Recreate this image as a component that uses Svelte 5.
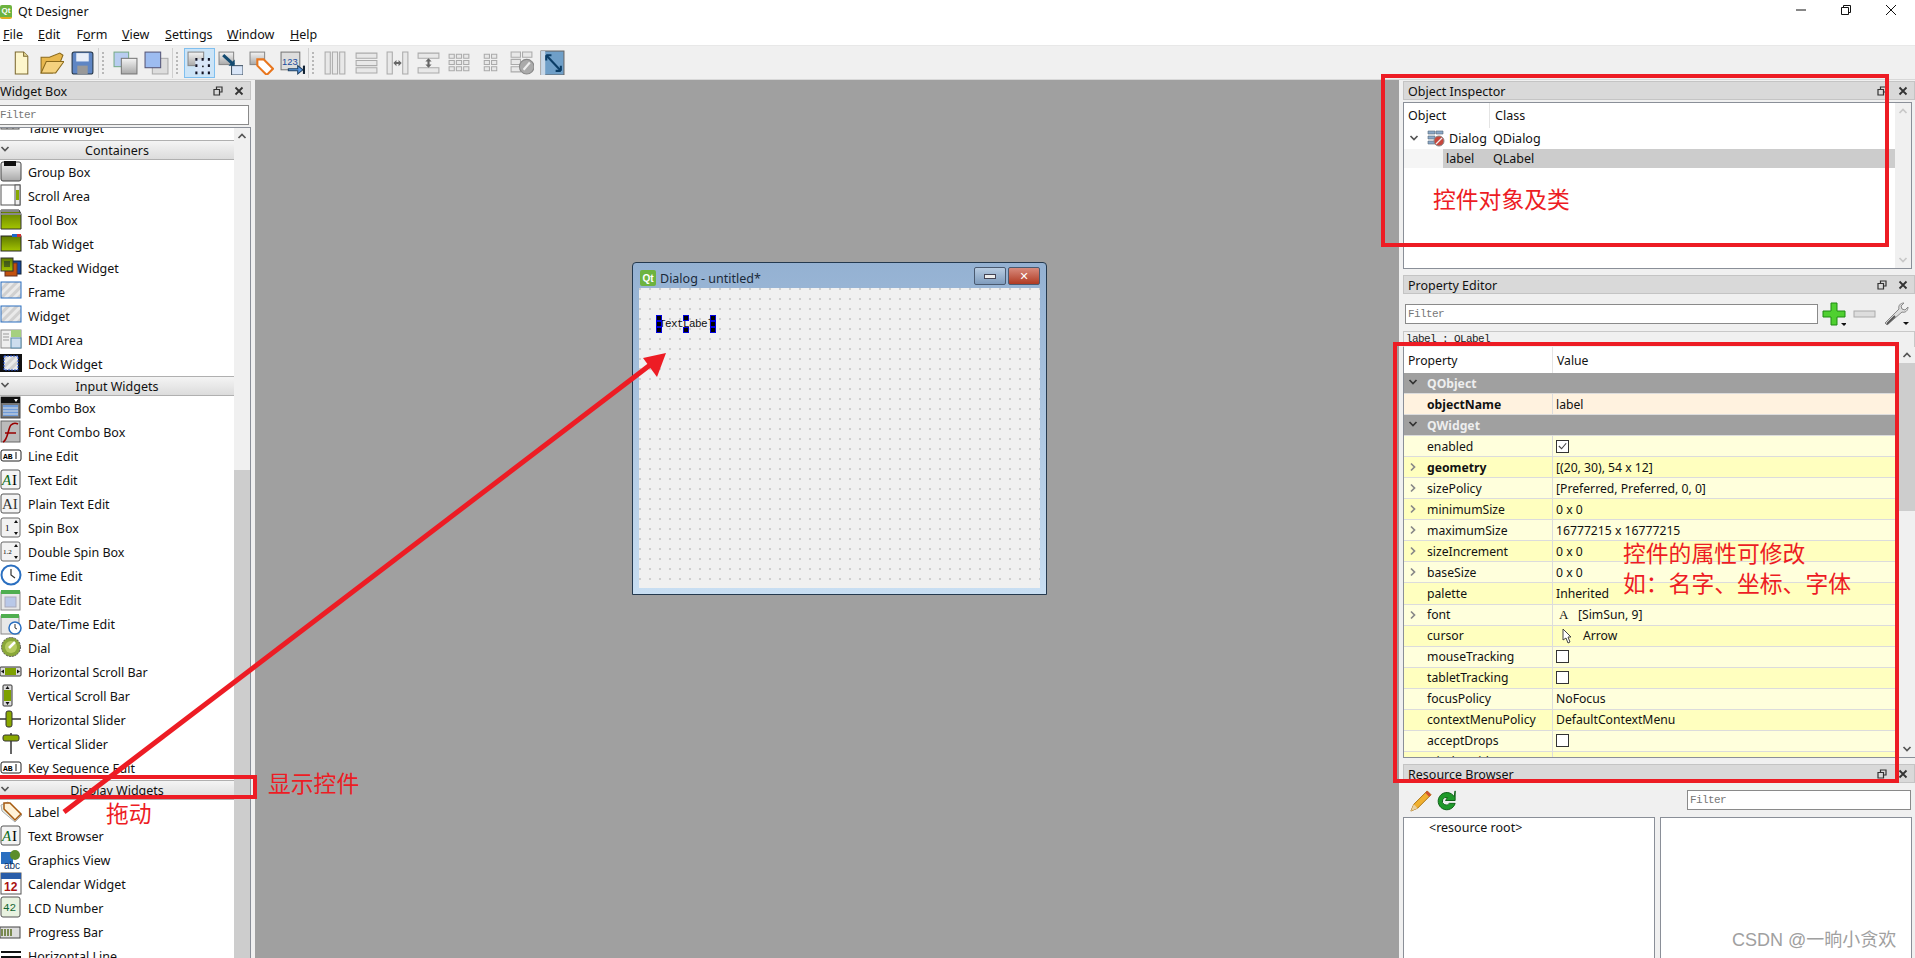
<script>
	const icons = {
		group: '<rect x="1" y="2" width="20" height="19" rx="2" fill="url(#gray)" stroke="#444"/><rect x="4" y="1" width="12" height="5" fill="#111"/>',
		scroll: '<rect x="1" y="1" width="19" height="20" fill="#fff" stroke="#555"/><rect x="15" y="1" width="5" height="20" fill="#eee" stroke="#555"/><rect x="16" y="6" width="3" height="10" fill="#8a0"/>',
		toolbox: '<path d="M1 2h18l2 4v15H1z" fill="url(#grn)" stroke="#333"/><path d="M1 3h18M1 6h20" stroke="#888" stroke-width="2"/>',
		tab: '<rect x="1" y="4" width="20" height="15" fill="url(#grn)" stroke="#222"/><rect x="12" y="2" width="5" height="3" fill="#1c68c8"/><rect x="17" y="2" width="4" height="3" fill="#c33"/>',
		stacked: '<rect x="8" y="5" width="13" height="13" fill="#1549a8" stroke="#123"/><rect x="5" y="7" width="12" height="13" fill="#c2510f" stroke="#632"/><rect x="1" y="2" width="12" height="13" fill="url(#grn)" stroke="#333"/><path d="M4 6h6M4 8h6M4 10h6" stroke="#123"/>',
		frame: '<rect x="1" y="2" width="20" height="16" fill="url(#hatch)" stroke="#2a6fc0"/>',
		mdi: '<rect x="1" y="2" width="20" height="18" fill="#eee" stroke="#888"/><rect x="11" y="2" width="10" height="7" fill="#a5d080"/><rect x="11" y="10" width="10" height="10" fill="#cde" stroke="#58a"/><path d="M3 6h6M3 9h6M3 12h6" stroke="#999"/>',
		dock: '<rect x="0" y="2" width="22" height="18" fill="#111"/><rect x="4" y="4" width="14" height="14" fill="url(#hatch)" stroke="#25d" stroke-dasharray="2 1"/>',
		combo: '<rect x="1" y="1" width="19" height="21" fill="#777" stroke="#444"/><rect x="1" y="1" width="19" height="6" fill="#111"/><path d="M14 3h4l-2 3z" fill="#fff"/><rect x="3" y="9" width="15" height="11" fill="#6f9bd8"/><path d="M3 12h15M3 15h15M3 18h15" stroke="#ddd"/>',
		fontcombo: '<rect x="1" y="1" width="19" height="21" fill="#bbb" stroke="#666"/><path d="M3 22C8 20 8 8 11 5c2-2 5-2 7-1M5 13h11" fill="none" stroke="#900" stroke-width="1.6"/>',
		line: '<rect x="1" y="6" width="20" height="11" rx="2" fill="#fff" stroke="#222"/><text x="3" y="15" font-size="8" font-weight="700" font-family="Liberation Mono">AB</text><path d="M16 8v7" stroke="#111"/>',
		text: '<rect x="1" y="2" width="19" height="19" rx="2" fill="#f4f4f4" stroke="#555"/><text x="2" y="17" font-size="15" fill="#0a6b1a" font-family="Liberation Serif" font-style="italic">A</text><text x="12" y="17" font-size="15" font-family="Liberation Serif">I</text>',
		plain: '<rect x="1" y="2" width="19" height="19" rx="2" fill="#f4f4f4" stroke="#555"/><text x="2" y="17" font-size="15" fill="#333" font-family="Liberation Serif">AI</text>',
		spin: '<rect x="1" y="2" width="19" height="19" rx="2" fill="#f2f2f2" stroke="#666"/><text x="5" y="15" font-size="9" font-family="Liberation Serif">1</text><path d="M14 7l2-3 2 3zM14 16l2 3 2-3z" fill="#111"/>',
		dspin: '<rect x="1" y="2" width="19" height="19" rx="2" fill="#f2f2f2" stroke="#666"/><text x="3" y="14" font-size="7" font-family="Liberation Serif">1.2</text><path d="M14 7l2-3 2 3zM14 16l2 3 2-3z" fill="#111"/>',
		time: '<circle cx="11" cy="11" r="9.5" fill="#fff" stroke="#2a6fc0" stroke-width="2"/><path d="M11 5v6l4 3" fill="none" stroke="#333" stroke-width="1.2"/>',
		date: '<rect x="1" y="4" width="19" height="18" fill="#e8e8e8" stroke="#888"/><rect x="1" y="2" width="19" height="4" fill="#4fae4f"/><rect x="5" y="9" width="11" height="10" fill="#b9c8e8" stroke="#aab"/>',
		datetime: '<rect x="1" y="4" width="18" height="18" fill="#e8e8e8" stroke="#888"/><rect x="1" y="2" width="18" height="4" fill="#4fae4f"/><circle cx="15" cy="16" r="6" fill="#fff" stroke="#2a6fc0" stroke-width="1.5"/><path d="M15 12v4l2 1" fill="none" stroke="#333"/>',
		dial: '<circle cx="11" cy="11" r="9.5" fill="#8aa838" stroke="#555" stroke-dasharray="2 1"/><circle cx="11" cy="11" r="6" fill="#b7cc60"/><path d="M9 12l6-6" stroke="#fff" stroke-width="2.5"/>',
		hscroll: '<rect x="0" y="7" width="21" height="9" rx="1" fill="#ddd" stroke="#333"/><rect x="5" y="8" width="11" height="7" fill="#7da000"/><path d="M1 11.5l3-2v4zM20 11.5l-3-2v4z" fill="#111"/>',
		vscroll: '<rect x="3" y="1" width="9" height="21" rx="1" fill="#ddd" stroke="#333"/><rect x="4" y="6" width="7" height="11" fill="#7da000"/><path d="M7.5 2l2 3h-4zM7.5 21l2-3h-4z" fill="#111"/>',
		hslider: '<path d="M0 11h21" stroke="#333" stroke-width="1.5"/><rect x="6" y="3" width="6" height="16" rx="2" fill="#8aa800" stroke="#333"/>',
		vslider: '<path d="M11 1v21" stroke="#333" stroke-width="1.5"/><rect x="3" y="3" width="16" height="6" rx="2" fill="#8aa800" stroke="#333"/>',
		label: '<path d="M1 5l7-3 14 13-7 7L2 11z" fill="#e8f0e8" stroke="#aaa"/><path d="M4 3h6l11 11-6 6L4 9z" fill="#fff2d8" stroke="#a65a10" stroke-width="1.5"/>',
		graphics: '<rect x="1" y="4" width="12" height="12" fill="#2a6fc0"/><circle cx="15" cy="7" r="5" fill="#5b8e2a"/><text x="4" y="21" font-size="10" fill="#136" font-family="Liberation Sans">abc</text>',
		calendar: '<rect x="1" y="1" width="20" height="21" fill="#fff" stroke="#555"/><rect x="1" y="1" width="20" height="6" fill="#2a5da8"/><text x="4" y="19" font-size="12" font-weight="700" fill="#a11" font-family="Liberation Sans">12</text>',
		lcd: '<rect x="1" y="1" width="19" height="20" rx="2" fill="#e8f2e0" stroke="#555"/><text x="3" y="15" font-size="11" fill="#163" font-family="Liberation Mono">42</text>',
		progress: '<rect x="0" y="7" width="20" height="11" fill="#ddd" stroke="#444"/><path d="M2 9v7M5 9v7M8 9v7M11 9v7" stroke="#7a8a50" stroke-width="2"/>',
		hline: '<path d="M1 8h20M1 13h20M1 18h20" stroke="#111" stroke-width="2"/>',
		table: '<rect x="1" y="1" width="18" height="12" fill="#ddd" stroke="#555"/><path d="M7 1v12M13 1v12M1 7h18" stroke="#555"/>',
		newdoc: '<path d="M7 2h8l4 4v17H7z" fill="#fdf6cc" stroke="#7d6a30"/><path d="M15 2v4h4" fill="#e8dd99" stroke="#7d6a30"/>',
		open: '<path d="M2 22V7h8l10-4 3 2-4 10-6 7z" fill="#e8b84e" stroke="#8a6a1c"/><path d="M2 22l5-11h17l-8 11z" fill="#f5d27e" stroke="#8a6a1c"/>',
		save: '<rect x="2" y="2" width="20" height="21" rx="2" fill="#5f86c4" stroke="#234"/><rect x="6" y="3" width="12" height="8" fill="#e8eef8"/><rect x="7" y="15" width="10" height="8" fill="#999"/>',
		widgets1: '<rect x="1" y="2" width="14" height="14" fill="#b8cdf0" stroke="#7a8"/><rect x="8" y="8" width="15" height="15" fill="url(#gray)" stroke="#777"/>',
		widgets2: '<rect x="8" y="8" width="15" height="15" fill="#ddd" stroke="#aaa"/><rect x="1" y="2" width="15" height="15" fill="#9dbcf0" stroke="#557"/>',
		edit: '<rect x="1" y="2" width="15" height="13" fill="url(#gray)" stroke="#888"/><rect x="8" y="9" width="14" height="13" fill="#d9e6f8"/><path d="M8 9h2M20 9h2M8 22h2M20 22h2M14 9h2M14 22h2M8 15h2M20 15h2" stroke="#112" stroke-width="2.5"/><rect x="14.5" y="15" width="1.5" height="1.5" fill="#111"/>',
		signals: '<rect x="1" y="2" width="14" height="12" fill="url(#gray)" stroke="#888"/><rect x="13" y="15" width="11" height="9" fill="#d9e6f8" stroke="#456"/><path d="M5 5l10 9" stroke="#124a70" stroke-width="3"/><path d="M10 15h6v-6z" fill="#124a70"/>',
		buddy: '<rect x="1" y="2" width="14" height="12" fill="url(#gray)" stroke="#888"/><path d="M8 9h6l9 9-6 6-9-9z" fill="#fff" stroke="#e8761e" stroke-width="2"/>',
		tab123: '<rect x="1" y="2" width="18" height="17" fill="#ddd" stroke="#777"/><text x="2" y="14" font-size="9" fill="#1b4b9b" font-family="Liberation Sans">123</text><path d="M8 18h9v-3l5 4-5 4v-3H8z" fill="#5a97e0" stroke="#246"/><path d="M23 15v8" stroke="#123" stroke-width="2"/>',
		lh: '<path d="M2 2h5v21H2zM9 2h5v21H9zM16 2h5v21h-5z" fill="#e8e8e8" stroke="#aaa"/>',
		lv: '<path d="M2 3h20v5H2zM2 10h20v5H2zM2 17h20v5H2z" fill="#e8e8e8" stroke="#aaa"/>',
		splith: '<path d="M2 2h5v21H2zM17 2h5v21h-5z" fill="#e8e8e8" stroke="#aaa"/><path d="M8 12.5l3-3v2h2v-2l3 3-3 3v-2h-2v2z" fill="#666"/>',
		splitv: '<path d="M2 3h20v5H2zM2 17h20v5H2z" fill="#e8e8e8" stroke="#aaa"/><path d="M12 8l3 3h-2v3h2l-3 3-3-3h2v-3H9z" fill="#666"/>',
		grid: '<path d="M2 4h5v4H2zM9 4h5v4H9zM16 4h5v4h-5zM2 10h5v4H2zM9 10h5v4H9zM16 10h5v4h-5zM2 16h5v4H2zM9 16h5v4H9zM16 16h5v4h-5z" fill="#e8e8e8" stroke="#aaa"/>',
		formgrid: '<path d="M6 4h5v4H6zM13 4h5v4h-5zM6 10h5v4H6zM13 10h5v4h-5zM6 16h5v4H6zM13 16h5v4h-5z" fill="#e8e8e8" stroke="#aaa"/>',
		breakl: '<path d="M2 2h9v5H2zM13 2h9v5h-9zM2 9h9v5H2zM2 16h9v5H2z" fill="#e8e8e8" stroke="#aaa"/><circle cx="17" cy="16" r="7" fill="#aaa" stroke="#888"/><path d="M20 12l-6 7" stroke="#eee" stroke-width="2"/>',
		adjust: '<rect x="1" y="1" width="22" height="23" fill="#6f9fc8" stroke="#666"/><rect x="1" y="1" width="4" height="23" fill="#c8d8e8"/><path d="M6 5l14 15" stroke="#0b3d66" stroke-width="2"/><path d="M6 5h5M6 5v5M20 20h-5M20 20v-5" stroke="#0b3d66" stroke-width="2"/>'
	};

	const sections = [
		{ title: 'Containers', items: [['Group Box', 'group'], ['Scroll Area', 'scroll'], ['Tool Box', 'toolbox'], ['Tab Widget', 'tab'], ['Stacked Widget', 'stacked'], ['Frame', 'frame'], ['Widget', 'frame'], ['MDI Area', 'mdi'], ['Dock Widget', 'dock']] },
		{ title: 'Input Widgets', items: [['Combo Box', 'combo'], ['Font Combo Box', 'fontcombo'], ['Line Edit', 'line'], ['Text Edit', 'text'], ['Plain Text Edit', 'plain'], ['Spin Box', 'spin'], ['Double Spin Box', 'dspin'], ['Time Edit', 'time'], ['Date Edit', 'date'], ['Date/Time Edit', 'datetime'], ['Dial', 'dial'], ['Horizontal Scroll Bar', 'hscroll'], ['Vertical Scroll Bar', 'vscroll'], ['Horizontal Slider', 'hslider'], ['Vertical Slider', 'vslider'], ['Key Sequence Edit', 'line']] },
		{ title: 'Display Widgets', items: [['Label', 'label'], ['Text Browser', 'text'], ['Graphics View', 'graphics'], ['Calendar Widget', 'calendar'], ['LCD Number', 'lcd'], ['Progress Bar', 'progress'], ['Horizontal Line', 'hline']] }
	];

	const toolbar = [
		['newdoc', 'open', 'save'],
		['widgets1', 'widgets2'],
		['edit', 'signals', 'buddy', 'tab123'],
		['lh', 'lv', 'splith', 'splitv', 'grid', 'formgrid', 'breakl', 'adjust']
	];

	const menus = [['F', 'ile'], ['E', 'dit'], ['F', 'o', 'rm'], ['V', 'iew'], ['S', 'ettings'], ['W', 'indow'], ['H', 'elp']];

	const props = [
		{ name: 'QObject', group: true },
		{ name: 'objectName', value: 'label', bold: true, tone: 'peach' },
		{ name: 'QWidget', group: true },
		{ name: 'enabled', check: true, checked: true, tone: 'light' },
		{ name: 'geometry', value: '[(20, 30), 54 x 12]', bold: true, more: true, tone: 'dark' },
		{ name: 'sizePolicy', value: '[Preferred, Preferred, 0, 0]', more: true, tone: 'light' },
		{ name: 'minimumSize', value: '0 x 0', more: true, tone: 'dark' },
		{ name: 'maximumSize', value: '16777215 x 16777215', more: true, tone: 'light' },
		{ name: 'sizeIncrement', value: '0 x 0', more: true, tone: 'dark' },
		{ name: 'baseSize', value: '0 x 0', more: true, tone: 'light' },
		{ name: 'palette', value: 'Inherited', tone: 'dark' },
		{ name: 'font', value: '[SimSun, 9]', more: true, glyph: 'font', tone: 'light' },
		{ name: 'cursor', value: 'Arrow', glyph: 'cursor', tone: 'dark' },
		{ name: 'mouseTracking', check: true, tone: 'light' },
		{ name: 'tabletTracking', check: true, tone: 'dark' },
		{ name: 'focusPolicy', value: 'NoFocus', tone: 'light' },
		{ name: 'contextMenuPolicy', value: 'DefaultContextMenu', tone: 'dark' },
		{ name: 'acceptDrops', check: true, tone: 'light' },
		{ name: 'windowTitle', value: '', tone: 'dark' }
	];
</script>

{#snippet icon(name, size = 24)}
	<svg class="ico" viewBox="0 0 24 24" width={size} height={size}>{@html icons[name]}</svg>
{/snippet}

{#snippet chevron(cls)}
	<svg class="chev {cls}" viewBox="0 0 10 10" width="10" height="10"><path d="M1.5 3l3.5 3.5L8.5 3" fill="none" stroke="currentColor" stroke-width="1.7" /></svg>
{/snippet}

{#snippet dockbtns()}
	<span class="dockbtns">
		<svg viewBox="0 0 10 10" width="10" height="10"><path d="M3.5 3.5V1h5.5v5H6.5M1 3.5h5.5v5.5H1z" fill="none" stroke="#333" stroke-width="1.2" /></svg>
		<svg viewBox="0 0 10 10" width="10" height="10"><path d="M1.5 1.5l7 7M8.5 1.5l-7 7" stroke="#333" stroke-width="1.8" /></svg>
	</span>
{/snippet}

{#snippet sbar(gap, thumb, disabled = false, endArrow = true)}
	<div class="sbar" class:off={disabled}>
		<svg class="arrow" viewBox="0 0 10 10" width="10" height="10"><path d="M1.5 7l3.5-3.5L8.5 7" fill="none" stroke="currentColor" stroke-width="1.7" /></svg>
		<div class="track">
			<div style="height: {gap}px"></div>
			{#if thumb}<div class="thumb" style="height: {thumb}px"></div>{/if}
		</div>
		{#if endArrow}
			<svg class="arrow" viewBox="0 0 10 10" width="10" height="10"><path d="M1.5 3l3.5 3.5L8.5 3" fill="none" stroke="currentColor" stroke-width="1.7" /></svg>
		{/if}
	</div>
{/snippet}

<svg class="defs" width="0" height="0">
	<defs>
		<linearGradient id="gray" x1="0" y1="0" x2="0" y2="1"><stop offset="0" stop-color="#f4f4f4" /><stop offset="1" stop-color="#a8a8a8" /></linearGradient>
		<linearGradient id="grn" x1="0" y1="0" x2="0" y2="1"><stop offset="0" stop-color="#5f7a00" /><stop offset="1" stop-color="#a4c400" /></linearGradient>
		<pattern id="hatch" width="6" height="6" patternUnits="userSpaceOnUse" patternTransform="rotate(45)"><rect width="6" height="6" fill="#eaeaea" /><rect width="3" height="6" fill="#d0d0d0" /></pattern>
	</defs>
</svg>

<div class="app">
	<header class="titlebar">
		<span class="qt small">Qt</span>
		<span class="apptitle">Qt Designer</span>
		<div class="winbtns">
			<svg viewBox="0 0 12 12" width="12" height="12"><path d="M1 6h10" stroke="#111" /></svg>
			<svg viewBox="0 0 12 12" width="12" height="12"><path d="M1.5 3.5h7v7h-7zM3.5 3.5v-2h7v7h-2" fill="none" stroke="#111" /></svg>
			<svg viewBox="0 0 12 12" width="12" height="12"><path d="M1 1l10 10M11 1L1 11" stroke="#111" /></svg>
		</div>
	</header>

	<nav class="menubar">
		{#each menus as m}
			{#if m.length === 3}
				<span>{m[0]}<u>{m[1]}</u>{m[2]}</span>
			{:else}
				<span><u>{m[0]}</u>{m[1]}</span>
			{/if}
		{/each}
	</nav>

	<div class="toolbar">
		{#each toolbar as group, g}
			{#if g > 0}<span class="sep"></span>{/if}
			{#each group as name}
				<span class="tool" class:active={name === 'edit'}>{@render icon(name, 25)}</span>
			{/each}
		{/each}
	</div>

	<main class="body">
		<aside class="left">
			<div class="docktitle"><span class="dt">Widget Box</span>{@render dockbtns()}</div>
			<div class="filter boxfilter">Filter</div>
			<div class="boxlist">
				<div class="boxrows">
					<div class="boxscroll">
						<div class="wrow">{@render icon('table', 24)}<span>Table Widget</span></div>
						{#each sections as s}
							<div class="cat">{@render chevron('catchev')}{s.title}</div>
							{#each s.items as [label, ic]}
								<div class="wrow">{@render icon(ic, 24)}<span>{label}</span></div>
							{/each}
						{/each}
					</div>
				</div>
				{@render sbar(326, 600, false, false)}
			</div>
		</aside>

		<section class="canvas">
			<div class="dialog">
				<div class="dlgtitle">
					<span class="qt">Qt</span>
					<span class="dlgname">Dialog - untitled*</span>
					<span class="dlgmin"><i></i></span>
					<span class="dlgclose">✕</span>
				</div>
				<div class="form">
					<div class="textlabel">
						<span class="tl">TextLabel</span>
						{#each ['a', 'b', 'c', 'd', 'e', 'f', 'g', 'h'] as h}
							<i class="handle {h}"></i>
						{/each}
					</div>
				</div>
			</div>
		</section>

		<aside class="right">
			<div class="docktitle"><span class="dt">Object Inspector</span>{@render dockbtns()}</div>
			<div class="inspector">
				<div class="treewrap">
					<div class="thead">
						<span class="tobj">Object</span><span>Class</span>
					</div>
					<div class="treerow">
						{@render chevron('treechev')}
						<svg class="dlgico" viewBox="0 0 18 18" width="18" height="18">
							<path d="M1 2h7v3H1zM9 2h7v3H9zM1 7h7v3H1zM1 12h7v3H1z" fill="#8aa8c8" stroke="#567" stroke-width=".6" />
							<circle cx="12" cy="12" r="5" fill="#c8463c" stroke="#888" />
							<path d="M9 15l6-6" stroke="#eee" stroke-width="1.3" />
						</svg>
						<span class="tname">Dialog</span><span>QDialog</span>
					</div>
					<div class="treerow sel">
						<span class="treeindent"></span>
						<span class="tlabel">label</span><span>QLabel</span>
					</div>
				</div>
				{@render sbar(0, 0, true)}
			</div>

			<div class="docktitle second"><span class="dt">Property Editor</span>{@render dockbtns()}</div>
			<div class="propbar">
				<div class="filter propfilter">Filter</div>
				<svg viewBox="0 0 24 24" width="24" height="24"><path d="M9 1h6v8h8v6h-8v8H9v-8H1V9h8z" fill="#4fd030" stroke="#1e8a12" /><path d="M19 21h6l-3 3z" fill="#111" /></svg>
				<svg class="minus" viewBox="0 0 24 24" width="24" height="24"><rect x="1" y="9" width="21" height="6" fill="#ddd" stroke="#aaa" /></svg>
				<svg viewBox="0 0 26 26" width="26" height="26"><path d="M4 24l-2-2L16 8c-1-3 1-6 5-6l-3 3 1 3 3 1 3-3c0 4-3 6-6 5z" fill="#ddd" stroke="#888" /><path d="M4 23l8-8" stroke="#555" stroke-width="2" /><path d="M20 21h6l-3 3z" fill="#111" /></svg>
			</div>
			<div class="classname"><span>label : QLabel</span></div>
			<div class="props">
				<div class="ptable">
					<div class="phead"><span class="pn">Property</span><span class="pv">Value</span></div>
					{#each props as p}
						{#if p.group}
							<div class="prow group">{@render chevron('groupchev')}<span class="pgroup">{p.name}</span></div>
						{:else}
							<div class="prow {p.tone}">
								<span class="pname" class:bold={p.bold}>
									{#if p.more}
										<svg class="more" viewBox="0 0 10 10" width="10" height="10"><path d="M3 1.5L6.5 5 3 8.5" fill="none" stroke="#888" stroke-width="1.7" /></svg>
									{/if}
									{p.name}
								</span>
								<span class="pvalue">
									{#if p.check}
										<span class="cb">
											{#if p.checked}
												<svg viewBox="0 0 12 12" width="12" height="12"><path d="M2 6l3 3 5-6" fill="none" stroke="#444" stroke-width="1.2" /></svg>
											{/if}
										</span>
									{:else if p.glyph === 'font'}
										<span class="gl">A</span><span>{p.value}</span>
									{:else if p.glyph === 'cursor'}
										<svg class="cur" viewBox="0 0 12 16" width="12" height="16"><path d="M2 1v11l3-2 2 5 2-1-2-5h3z" fill="#fff" stroke="#444" /></svg><span>{p.value}</span>
									{:else}
										{p.value}
									{/if}
								</span>
							</div>
						{/if}
					{/each}
				</div>
				{@render sbar(0, 148)}
			</div>

			<div class="docktitle third"><span class="dt">Resource Browser</span>{@render dockbtns()}</div>
			<div class="resbar">
				<svg viewBox="0 0 24 24" width="23" height="23"><path d="M2 23l3-7L19 2l4 4L9 20z" fill="#f0b030" stroke="#a87010" /><path d="M2 23l3-7 4 4z" fill="#e8d0a0" /><path d="M19 2l4 4-2 2-4-4z" fill="#d05030" /></svg>
				<svg viewBox="0 0 24 24" width="23" height="23"><path d="M20 8a9 9 0 1 0 1 7h-6a4 4 0 1 1-2-6l-2 3h10V2z" fill="#1f9a2a" stroke="#0c5d14" /></svg>
				<div class="filter resfilter">Filter</div>
			</div>
			<div class="respanes">
				<div class="respane first"><span>&lt;resource root&gt;</span></div>
				<div class="respane"></div>
			</div>
		</aside>
	</main>

	<div class="redbox rb1"></div>
	<div class="redbox rb2"></div>
	<div class="redbox rb3"></div>
	<svg class="arrowlay" viewBox="0 0 1915 958" width="1915" height="958">
		<path d="M64 812L654 362" stroke="#ed1c24" stroke-width="5" />
		<path d="M666 353L643 358L657 377z" fill="#ed1c24" />
	</svg>
	<span class="note n1">显示控件</span>
	<span class="note n2">拖动</span>
	<span class="note n3">控件对象及类</span>
	<span class="note n4">控件的属性可修改</span>
	<span class="note n5">如：名字、坐标、字体</span>
	<span class="mark">CSDN @一晌小贪欢</span>
</div>

<style>
	:global(body) {
		margin: 0;
		background: #f0f0f0;
	}

	.defs {
		position: absolute;
	}

	.app {
		position: relative;
		width: 1915px;
		height: 958px;
		overflow: hidden;
		display: flex;
		flex-direction: column;
		font-family: 'Noto Sans', 'Noto Sans CJK SC', sans-serif;
		font-size: 12px;
		color: #111;
		background: #f0f0f0;
	}

	.ico {
		flex: none;
		display: block;
	}

	.qt {
		display: inline-flex;
		align-items: center;
		justify-content: center;
		width: 16px;
		height: 16px;
		background: #6db33f;
		border-radius: 2px;
		color: #fff;
		font: 700 10px 'Liberation Sans', sans-serif;
	}

	.qt.small {
		width: 12px;
		height: 14px;
		font-size: 8px;
		border-bottom: 2px solid #e0b020;
		box-sizing: border-box;
	}

	.titlebar {
		height: 24px;
		flex: none;
		background: #fff;
		display: flex;
		align-items: center;
		gap: 6px;
		padding-bottom: 1px;
		box-sizing: border-box;
		font-size: 12.5px;
	}

	.winbtns {
		margin-left: auto;
		display: flex;
		gap: 33px;
		padding: 0 18px 3px 0;
	}

	.menubar {
		height: 22px;
		flex: none;
		background: #fff;
		display: grid;
		grid-template-columns: 35px 38.5px 45.5px 43px 62px 63px auto;
		align-items: center;
		padding-left: 3px;
		border-bottom: 1px solid #e8e8e8;
		box-sizing: border-box;
		font-size: 12.5px;
	}

	.toolbar {
		height: 34px;
		flex: none;
		display: flex;
		align-items: center;
		padding-left: 5px;
		border-bottom: 1px solid #d8d8d8;
		box-sizing: border-box;
	}

	.tool {
		width: 31px;
		height: 30px;
		display: flex;
		align-items: center;
		justify-content: center;
		box-sizing: border-box;
	}

	.tool.active {
		background: #cce4f7;
		border: 1px solid #7fbfef;
	}

	.sep {
		width: 12px;
		height: 30px;
		box-sizing: border-box;
		border-left: 1px solid #d0d0d0;
		margin-left: 0;
		position: relative;
	}

	.sep::after {
		content: '';
		position: absolute;
		left: 3px;
		top: 4px;
		bottom: 4px;
		border-left: 2px dotted #b8b8b8;
	}

	.body {
		flex: 1;
		display: flex;
		min-height: 0;
	}

	.left {
		width: 255px;
		flex: none;
		display: flex;
		flex-direction: column;
		padding-top: 1px;
		box-sizing: border-box;
	}

	.docktitle {
		height: 19px;
		flex: none;
		background: #d9d9d9;
		border: 1px solid #c4c4c4;
		box-sizing: border-box;
		display: flex;
		align-items: center;
		padding-left: 4px;
		font-size: 12.5px;
	}

	.dt {
		padding-top: 2px;
	}

	.left .docktitle {
		width: 251px;
		padding-left: 0;
		border-left: 0;
	}

	.dockbtns {
		margin-left: auto;
		display: flex;
		gap: 11px;
		padding-right: 6px;
	}

	.filter {
		box-sizing: border-box;
		background: #fff;
		border: 1px solid #8a8a8a;
		font-family: 'Liberation Mono', monospace;
		font-size: 11px;
		letter-spacing: -0.6px;
		color: #777;
		display: flex;
		align-items: center;
		padding-left: 2px;
	}

	.boxfilter {
		width: 249px;
		height: 20px;
		margin: 5px 0 2px;
		padding-left: 0;
		border-left: 0;
	}

	.boxlist {
		flex: 1;
		min-height: 0;
		width: 251px;
		display: flex;
		background: #fff;
		border: 1px solid #8a8f98;
		border-left: 0;
		border-bottom: 0;
		box-sizing: border-box;
	}

	.boxrows {
		flex: 1;
		overflow: hidden;
	}

	.boxscroll {
		margin-top: -12px;
	}

	.wrow {
		height: 24px;
		display: flex;
		align-items: center;
		gap: 4px;
		font-size: 12.5px;
	}

	.cat {
		height: 20px;
		box-sizing: border-box;
		border-top: 1px solid #b0b0b0;
		border-bottom: 1px solid #b0b0b0;
		background: linear-gradient(#f4f4f4, #dcdcdc);
		text-align: center;
		line-height: 19px;
		position: relative;
		font-size: 12.5px;
	}

	.catchev {
		position: absolute;
		left: 0;
		top: 3px;
		color: #555;
	}

	.sbar {
		width: 16px;
		flex: none;
		display: flex;
		flex-direction: column;
		align-items: center;
		background: #f0f0f0;
		color: #555;
		overflow: hidden;
	}

	.sbar.off {
		color: #c8c8c8;
	}

	.arrow {
		flex: none;
		margin: 3px 0;
	}

	.track {
		flex: 1;
		width: 100%;
		min-height: 0;
		overflow: hidden;
	}

	.thumb {
		background: #cdcdcd;
	}

	.canvas {
		flex: 1;
		background: #a0a0a0;
		position: relative;
	}

	.dialog {
		position: absolute;
		left: 377px;
		top: 182px;
		width: 415px;
		height: 333px;
		box-sizing: border-box;
		border: 1px solid #24394e;
		border-radius: 4px 4px 0 0;
		background: linear-gradient(#94b1d2, #c8def2);
		padding: 0 6px 6px;
		display: flex;
		flex-direction: column;
	}

	.dlgtitle {
		height: 25px;
		flex: none;
		display: flex;
		align-items: center;
		gap: 4px;
		padding: 5px 0 0 1px;
		box-sizing: border-box;
		position: relative;
		font-size: 12.5px;
		color: #1a2a3a;
	}

	.dlgmin,
	.dlgclose {
		position: absolute;
		top: 4px;
		height: 18px;
		box-sizing: border-box;
		border: 1px solid #4a5a70;
		border-radius: 2px;
		display: flex;
		align-items: center;
		justify-content: center;
	}

	.dlgmin {
		left: 335px;
		width: 32px;
		background: linear-gradient(#b8cce2, #7f9cbd);
	}

	.dlgmin i {
		width: 10px;
		height: 3px;
		background: #eee;
		border: 1px solid #445;
	}

	.dlgclose {
		left: 369px;
		width: 32px;
		background: linear-gradient(#d88a7c, #b03a22);
		color: #fff;
		font: 700 11px 'DejaVu Sans', sans-serif;
	}

	.form {
		flex: 1;
		background-color: #f0f0f0;
		background-image: radial-gradient(circle at 1px 1px, #a8a8a8 0.6px, transparent 0.8px);
		background-size: 10px 10px;
		position: relative;
	}

	.textlabel {
		position: absolute;
		left: 20px;
		top: 30px;
		width: 54px;
		height: 12px;
	}

	.tl {
		position: absolute;
		left: 0;
		top: -2px;
		font: 11px/16px 'Liberation Mono', monospace;
		letter-spacing: -0.6px;
		color: #111;
		white-space: nowrap;
	}

	.handle {
		position: absolute;
		width: 6px;
		height: 6px;
		box-sizing: border-box;
		background: #000;
		border: 1px solid #0000e0;
	}

	.a { left: -3px; top: -3px; }
	.b { left: 24px; top: -3px; }
	.c { left: 51px; top: -3px; }
	.d { left: -3px; top: 3px; }
	.e { left: 51px; top: 3px; }
	.f { left: -3px; top: 9px; }
	.g { left: 24px; top: 9px; }
	.h { left: 51px; top: 9px; }

	.right {
		width: 516px;
		flex: none;
		padding: 1px 0 0 4px;
		box-sizing: border-box;
		display: flex;
		flex-direction: column;
	}

	.inspector {
		height: 167px;
		flex: none;
		margin-top: 2px;
		background: #fff;
		border: 1px solid #8a8f98;
		box-sizing: border-box;
		display: flex;
		margin-right: 3px;
	}

	.treewrap {
		flex: 1;
		font-size: 12.5px;
	}

	.thead {
		height: 25px;
		display: flex;
		align-items: center;
		padding-left: 4px;
	}

	.tobj {
		width: 81px;
		height: 100%;
		display: flex;
		align-items: center;
		border-right: 1px solid #e4e4e4;
		margin-right: 5px;
	}

	.treerow {
		height: 20px;
		display: flex;
		align-items: center;
	}

	.treerow.sel {
		height: 19px;
		margin-top: 1px;
		background: #cccccc;
	}

	.treechev {
		margin: 0 8px 0 5px;
		color: #555;
	}

	.dlgico {
		margin-right: 4px;
	}

	.tname {
		width: 44px;
	}

	.treeindent {
		width: 39px;
		height: 100%;
		background: #f5f5f5;
		margin-right: 3px;
	}

	.tlabel {
		width: 47px;
	}

	.docktitle.second {
		margin-top: 6px;
	}

	.propbar {
		height: 24px;
		flex: none;
		margin-top: 8px;
		display: flex;
		align-items: center;
		gap: 4px;
		padding-left: 2px;
	}

	.propfilter {
		width: 413px;
		height: 20px;
	}

	.propbar .minus {
		margin: 0 2px 0 3px;
	}

	.classname {
		height: 16px;
		flex: none;
		margin-top: 5px;
		border: 1px solid #c8c8c8;
		border-bottom: 0;
		box-sizing: border-box;
		overflow: hidden;
		font: 11px/15px 'Liberation Mono', monospace;
		letter-spacing: -0.6px;
		padding-left: 2px;
		color: #222;
	}

	.props {
		height: 411px;
		flex: none;
		background: #fff;
		border-bottom: 1px solid #8a8f98;
		border-left: 1px solid #8a8f98;
		box-sizing: border-box;
		display: flex;
	}

	.ptable {
		flex: 1;
		overflow: hidden;
		font-size: 12.2px;
	}

	.phead {
		height: 26px;
		display: flex;
		align-items: center;
	}

	.pn {
		width: 149px;
		height: 100%;
		padding-left: 4px;
		box-sizing: border-box;
		display: flex;
		align-items: center;
		border-right: 1px solid #e4e4e4;
	}

	.pv {
		padding-left: 4px;
	}

	.prow {
		height: 21.06px;
		box-sizing: border-box;
		display: flex;
		align-items: center;
		border-bottom: 1px solid #dcdcdc;
		position: relative;
	}

	.prow.group {
		background: #a0a0a0;
		color: #eee;
		font-weight: 700;
	}

	.groupchev {
		position: absolute;
		left: 4px;
		top: 4px;
		color: #333;
	}

	.pgroup {
		padding-left: 23px;
	}

	.peach { background: #fff2df; }
	.light { background: #ffffdc; }
	.dark { background: #ffffbf; }

	.pname {
		width: 149px;
		height: 100%;
		flex: none;
		padding-left: 23px;
		box-sizing: border-box;
		display: flex;
		align-items: center;
		position: relative;
		border-right: 1px solid #dcdcdc;
	}

	.pname.bold {
		font-weight: 700;
	}

	.more {
		position: absolute;
		left: 4px;
		top: 5px;
	}

	.pvalue {
		padding-left: 3px;
		display: flex;
		align-items: center;
	}

	.cb {
		width: 13px;
		height: 13px;
		box-sizing: border-box;
		background: #fff;
		border: 1px solid #333;
		display: flex;
		align-items: center;
		justify-content: center;
	}

	.gl {
		width: 22px;
		padding-left: 3px;
		box-sizing: border-box;
		font-family: 'Liberation Serif', serif;
		font-size: 13px;
	}

	.cur {
		margin: 0 10px 0 5px;
	}

	.docktitle.third {
		margin-top: 6px;
	}

	.resbar {
		height: 24px;
		flex: none;
		margin-top: 5px;
		display: flex;
		align-items: center;
		gap: 3px;
		padding-left: 6px;
	}

	.resfilter {
		width: 224px;
		height: 20px;
		margin-left: auto;
		margin-right: 4px;
	}

	.respanes {
		flex: 1;
		margin-top: 5px;
		display: flex;
		gap: 5px;
		padding-right: 3px;
	}

	.respane {
		flex: 1;
		background: #fff;
		border: 1px solid #8a8f98;
		border-bottom: 0;
	}

	.respane span {
		display: block;
		padding: 1px 0 0 25px;
		font-size: 12.5px;
	}

	.redbox {
		position: absolute;
		box-sizing: border-box;
		border: 4px solid #ed1c24;
	}

	.rb1 {
		left: 1381px;
		top: 74px;
		width: 508px;
		height: 173px;
	}

	.rb2 {
		left: 1393px;
		top: 342px;
		width: 506px;
		height: 441px;
	}

	.rb3 {
		left: -6px;
		top: 775px;
		width: 263px;
		height: 24px;
	}

	.arrowlay {
		position: absolute;
		left: 0;
		top: 0;
		pointer-events: none;
	}

	.note {
		position: absolute;
		color: #ed1c24;
		font-family: 'Noto Sans CJK SC', sans-serif;
		font-size: 22.8px;
		line-height: 30px;
		white-space: nowrap;
	}

	.n1 { left: 268px; top: 768px; }
	.n2 { left: 106px; top: 798px; }
	.n3 { left: 1433px; top: 184px; }
	.n4 { left: 1623px; top: 538px; }
	.n5 { left: 1623px; top: 568px; }

	.mark {
		position: absolute;
		left: 1732px;
		top: 925px;
		font-family: 'Liberation Sans', 'Noto Sans CJK SC', sans-serif;
		font-size: 18px;
		color: #a0a0a0;
		text-shadow: 0 0 1px #fff;
		white-space: nowrap;
	}
</style>
